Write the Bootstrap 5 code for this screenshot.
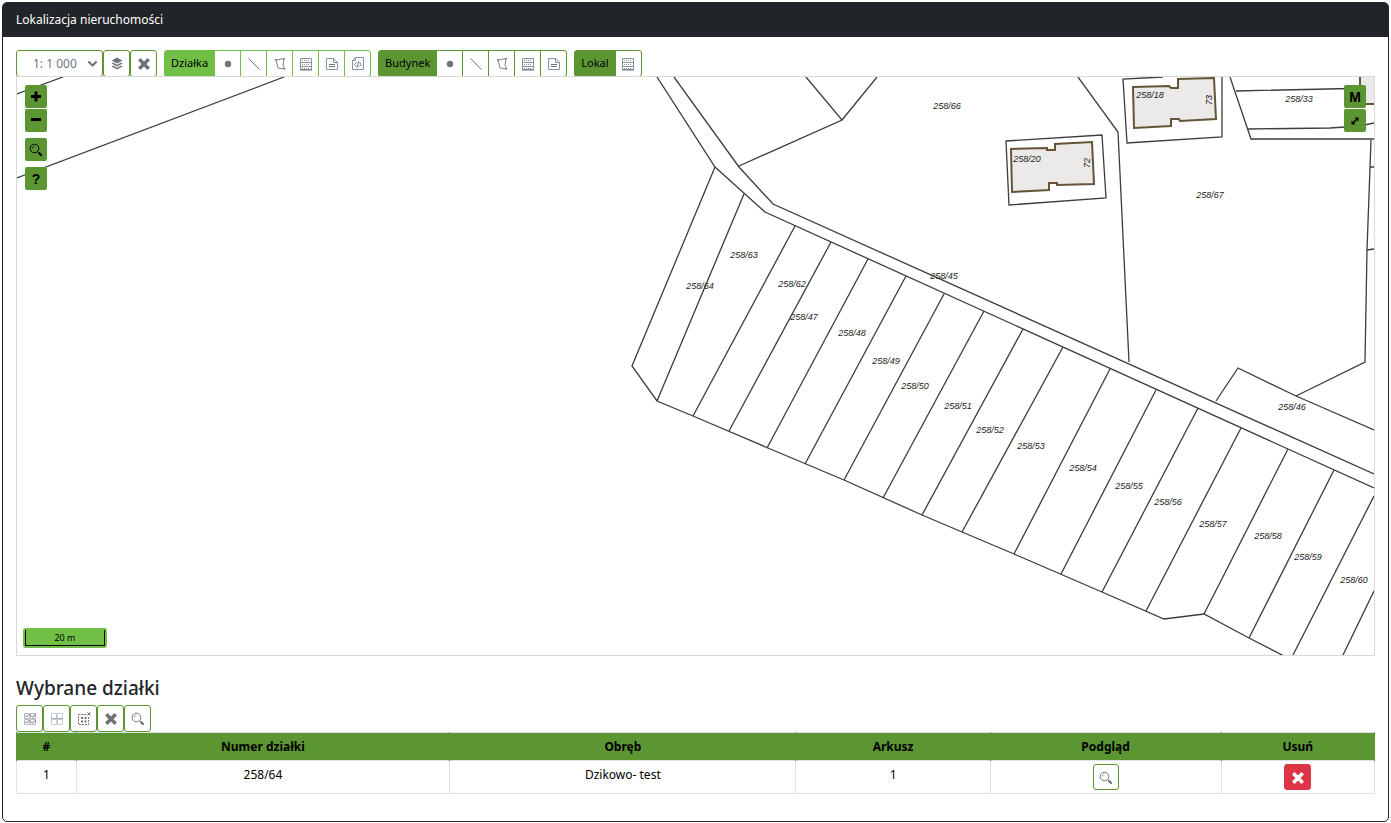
<!DOCTYPE html>
<html lang="pl">
<head>
<meta charset="utf-8">
<meta name="viewport" content="width=device-width, initial-scale=1">
<title>Lokalizacja nieruchomości</title>
<link href="https://cdn.jsdelivr.net/npm/bootstrap@5.3.0/dist/css/bootstrap.min.css" rel="stylesheet">
<style>
  :root { --leaf: #5c9632; --lime: #72bf47; --ink: #212529; --muted: #6c757d; }
  body { font-family: "Noto Sans", "Open Sans", sans-serif; font-size: 12px; line-height: 18px; color: #000; background: #fff; padding: 2px; }
  .panel { border: 1px solid var(--ink); border-radius: 5px; }
  .panel > .card-header { background: var(--ink); color: #fff; padding: 8px 13px; border-radius: 3px 3px 0 0; border-bottom: 0; line-height: 18px; }
  .panel > .card-body { padding: 13px 13px 27px; color: #000; }
  .tool { --bs-btn-padding-x: 0; --bs-btn-padding-y: 0; --bs-btn-font-size: 11px; --bs-btn-line-height: 18px; --bs-btn-border-radius: 3px;
    --bs-btn-color: var(--muted); --bs-btn-bg: #fff; --bs-btn-border-color: var(--leaf); --bs-btn-hover-bg: #eef6e8; --bs-btn-hover-color: var(--muted); --bs-btn-hover-border-color: var(--leaf);
    width: 27px; height: 27px; display: inline-flex; align-items: center; justify-content: center; }
  .tool svg { width: 16px; height: 16px; margin-top: 1px; }
  .tool-row { gap: 7px; }
  .btn-group > .tool { flex: none; }
  .lime .tool { --bs-btn-border-color: var(--lime); --bs-btn-hover-border-color: var(--lime); }
  .btn-group > .tool.tool-name { width: auto; padding: 0 6px 2px; color: #000; background: var(--leaf); }
  .lime.btn-group > .tool.tool-name { background: var(--lime); }
  .scale-pick { width: 87px; height: 27px; padding: 0 18px 0 16px; font-size: 12px; line-height: 18px; color: var(--muted); border-color: var(--leaf); border-radius: 3px; background-position: right 4px center; background-size: 11px;
    background-image: url("data:image/svg+xml,%3csvg xmlns='http://www.w3.org/2000/svg' viewBox='0 0 16 16'%3e%3cpath fill='none' stroke='%236c757d' stroke-width='3' d='m2 5 6 6 6-6'/%3e%3c/svg%3e"); }
  .map { border: 1px solid #d9d9d9; height: 580px; margin-top: -1px; }
  .map > svg { width: 100%; height: 100%; display: block; }
  .plots { fill: none; stroke: #3c3c3c; stroke-width: 1.3; }
  .houses { fill: #ebeae8; stroke: #65533a; stroke-width: 2; }
  .plot-no { font: italic 9px "Liberation Sans Narrow", "Liberation Sans", sans-serif; fill: #222; text-anchor: middle; }
  .map-tools { position: absolute; top: 8px; left: 8px; display: flex; flex-direction: column; gap: 6px; }
  .map-tools.at-right { left: auto; right: 8px; }
  .tool-pair { display: flex; flex-direction: column; gap: 1px; }
  .map-btn { width: 22px; height: 23px; padding: 0; border: 0; border-radius: 2px; background: var(--leaf); color: #000; display: flex; align-items: center; justify-content: center; font: bold 14px "Liberation Sans", sans-serif; }
  .map-btn svg { width: 14px; height: 14px; }
  .map-btn svg.lens { width: 16px; height: 16px; }
  .scale-line { position: absolute; left: 6px; bottom: 7px; width: 84px; padding: 2px; background: var(--lime); border-radius: 3px; }
  .scale-line > div { border: 1px solid #000; border-top: 0; text-align: center; font-size: 9px; line-height: 15px; }
  .subtitle { font-size: 19px; line-height: 24px; font-weight: 500; color: var(--ink); margin: 20px 0 5px; }
  .picked { margin: 0; text-align: center; table-layout: fixed; color: #000; border-color: #dee2e6; }
  .picked th, .picked td { padding: 4px; line-height: 18px; color: #000; }
  .picked thead th { background: var(--leaf); font-weight: 700; height: 28px; border-left-color: var(--leaf); border-right-color: var(--leaf); }
  .picked tbody td, .picked tbody th { padding: 3px; height: 33px; font-weight: 400; line-height: 21px; }
  .picked .tool { width: 26px; height: 26px; vertical-align: top; }
  .picked .tool.remove { --bs-btn-bg: #dc3545; --bs-btn-border-color: #dc3545; --bs-btn-color: #fff; --bs-btn-hover-bg: #bb2d3b; --bs-btn-hover-color: #fff; --bs-btn-hover-border-color: #bb2d3b; width: 27px; }
  .c-no { width: 4.4%; } .c-plot { width: 27.5%; } .c-area { width: 25.5%; } .c-sheet { width: 14.3%; } .c-view { width: 17%; }
</style>
</head>
<body>
<!-- Shared icon shapes -->
<svg class="d-none" aria-hidden="true">
  <symbol id="i-layers" viewBox="0 0 16 16"><g fill="currentColor"><path d="M8 1.500 13.500 4.500 8 7.500 2.500 4.500z"/><path d="M4 6.500 8 8.700l4-2.200 1.500 1L8 10.500l-5.500-3z"/><path d="M4 9.500 8 11.700l4-2.200 1.500 1L8 13.500l-5.500-3z"/></g></symbol>
  <symbol id="i-x" viewBox="0 0 16 16"><path d="m3.300 3.300 9.400 9.400m0-9.400-9.400 9.400" stroke="currentColor" stroke-width="3.600" fill="none"/></symbol>
  <symbol id="i-dot" viewBox="0 0 16 16"><circle cx="8" cy="8" r="3.200" fill="currentColor"/></symbol>
  <symbol id="i-line" viewBox="0 0 16 16"><path d="m2.500 2.500 11 11" stroke="currentColor" fill="none"/></symbol>
  <symbol id="i-poly" viewBox="0 0 16 16"><path d="m4 4 8-1.500M12 3l-1 6 1.500 3.500M4 4l2 8 6 1" stroke="currentColor" stroke-width=".9" fill="none"/><g fill="currentColor"><path d="M3 3.200h1.600v1.600H3zM11.200 2h1.600v1.600h-1.600zM11.500 12h1.600v1.600h-1.600z"/></g></symbol>
  <symbol id="i-form" viewBox="0 0 16 16"><path d="M2.500 2.500h11v11h-11z" stroke="#8495a8" fill="none"/><path d="M3 6.500h10M3 10.500h10" stroke="currentColor" stroke-width=".8" fill="none"/><path d="M4 4.500h8M4 8.500h8M4 12.500h8" stroke="currentColor" stroke-width=".8" stroke-dasharray="1 1" fill="none"/><path d="M2 14h12" stroke="currentColor"/></symbol>
  <symbol id="i-doc" viewBox="0 0 16 16"><path d="M2.500 2.500h7l4 4v7h-11zM9.500 2.500v4h4" stroke="#8495a8" fill="none"/><path d="M5 8.500h6M5 10.500h6" stroke="currentColor"/></symbol>
  <symbol id="i-code" viewBox="0 0 16 16"><path d="M2.500 4.500 5.500 1.500h8v12h-11zM2.500 4.500h3v-3" stroke="#8495a8" fill="none"/><path d="M6.500 6.500 4.700 8.500l1.800 2M9.500 6.500l1.800 2-1.800 2M8.700 5.500l-1.400 6" stroke="currentColor" fill="none"/></symbol>
  <symbol id="i-search" viewBox="0 0 16 16"><circle cx="6.500" cy="6.500" r="4.300" fill="none" stroke="currentColor"/><path d="M4.300 6.500a2.200 2.200 0 0 1 2.200-2.200" fill="none" stroke="currentColor" stroke-width=".6"/><path d="m9.500 9.500 1.500 1.500" stroke="currentColor"/><path d="m10.500 10.500 3.200 3.200" stroke="currentColor" stroke-width="2.200"/></symbol>
  <symbol id="i-checks" viewBox="0 0 16 16"><path d="M2.500 2.500h5v5h-5zM8.500 2.500h5v5h-5zM2.500 8.500h5v5h-5zM8.500 8.500h5v5h-5z" fill="none" stroke="#b9bcbf"/><path d="m3 4.500 1.500 1.500L7.500 3M9 4.500l1.500 1.500L14 3M3 10.500l1.500 1.500L7.500 9M9 10.500l1.500 1.500L14 9" stroke="currentColor" fill="none"/></symbol>
  <symbol id="i-grid" viewBox="0 0 16 16"><path d="M2.500 2.500h5v5h-5zM8.500 2.500h5v5h-5zM2.500 8.500h5v5h-5zM8.500 8.500h5v5h-5z" fill="none" stroke="#c6cdd8"/><path d="M2 7.500h12" stroke="#aaa"/></symbol>
  <symbol id="i-unselect" viewBox="0 0 16 16"><path d="M2.500 3.500h8M12.500 6v7.500h-10v-10" fill="none" stroke="currentColor" stroke-dasharray="2 1"/><path d="M5 6h2v2H5zM8.500 6h2v2h-2zM5 9.500h2v2H5zM8.500 9.500h2v2h-2z" fill="currentColor"/><path d="m11.500 1.500 3 3m0-3-3 3" stroke="currentColor"/></symbol>
</svg>

<main class="card panel">
  <div class="card-header">Lokalizacja nieruchomości</div>
  <div class="card-body">
    <div class="d-flex flex-wrap tool-row" role="toolbar" aria-label="Narzędzia mapy">
      <div class="d-flex">
        <select class="form-select scale-pick" aria-label="Skala mapy"><option>1: 1 000</option><option>1: 2 000</option></select>
        <button type="button" class="btn tool" aria-label="Warstwy"><svg><use href="#i-layers"/></svg></button>
        <button type="button" class="btn tool" aria-label="Wyczyść"><svg><use href="#i-x"/></svg></button>
      </div>
      <div class="btn-group lime">
        <button type="button" class="btn tool tool-name">Działka</button>
        <button type="button" class="btn tool" aria-label="Punkt"><svg><use href="#i-dot"/></svg></button>
        <button type="button" class="btn tool" aria-label="Linia"><svg><use href="#i-line"/></svg></button>
        <button type="button" class="btn tool" aria-label="Obszar"><svg><use href="#i-poly"/></svg></button>
        <button type="button" class="btn tool" aria-label="Formularz"><svg><use href="#i-form"/></svg></button>
        <button type="button" class="btn tool" aria-label="Plik"><svg><use href="#i-doc"/></svg></button>
        <button type="button" class="btn tool" aria-label="Kod"><svg><use href="#i-code"/></svg></button>
      </div>
      <div class="btn-group">
        <button type="button" class="btn tool tool-name">Budynek</button>
        <button type="button" class="btn tool" aria-label="Punkt"><svg><use href="#i-dot"/></svg></button>
        <button type="button" class="btn tool" aria-label="Linia"><svg><use href="#i-line"/></svg></button>
        <button type="button" class="btn tool" aria-label="Obszar"><svg><use href="#i-poly"/></svg></button>
        <button type="button" class="btn tool" aria-label="Formularz"><svg><use href="#i-form"/></svg></button>
        <button type="button" class="btn tool" aria-label="Plik"><svg><use href="#i-doc"/></svg></button>
      </div>
      <div class="btn-group">
        <button type="button" class="btn tool tool-name">Lokal</button>
        <button type="button" class="btn tool" aria-label="Formularz"><svg><use href="#i-form"/></svg></button>
      </div>
    </div>

    <div class="map position-relative overflow-hidden">
      <svg viewBox="17 77 1357 578" preserveAspectRatio="xMidYMid slice" role="img" aria-label="Mapa działek">
        <g class="plots">
          <path d="M17 94 63 77M17 178 284 77"/>
          <path d="M657 77 715 167 765 212 1374 488"/>
          <path d="M674 77 739 167 773 204 1374 474"/>
          <path d="M739 166 842 120 806 77M842 120 877 77"/>
          <path d="M715 167 632 366 657 401 693 416 768 448 844 480 922 515 1014 554 1102 592 1164 619 1204 614 1249 638 1284 656"/>
          <path d="M744 194 657 401M795 226 693 416M831 242 729 431M868 259 767 448M906 276 805 464M944 294 844 480M984 311 883 498M1023 329 922 515M1063 347 962 532M1110 369 1014 554M1156 390 1061 574M1198 408 1102 592M1241 428 1146 611M1288 449 1204 614M1334 470 1249 638M1374 496 1293 655M1374 591 1343 655"/>
          <path d="M1078 77 1118 132 1129 362M1216 401 1238 368 1296 396 1374 430M1296 396 1365 362 1367 250 1371 140M1367 250 1374 249M1370 167H1374"/>
          <path d="M1230 77 1251 139H1374M1236 91 1374 88M1248 129 1330 128 1360 126 1374 123"/>
          <path d="M1006 141 1102 135 1106 198 1009 205zM1163 77 1123 79 1127 143 1222 137V77"/>
        </g>
        <g class="houses">
          <path d="M1011 149 1047 148V150H1055V144L1092 142 1094 184 1057 185V183H1049V190L1012 192z"/>
          <path d="M1133 87 1169 86 1171 88H1178V79L1214 78 1216 119 1180 121 1179 119H1171V126L1134 128z"/>
          <path d="M1360 70V104H1378V70"/>
        </g>
        <g class="plot-no">
          <text x="947" y="109">258/66</text><text x="1299" y="102">258/33</text><text x="1150" y="98">258/18</text><text x="1027" y="162">258/20</text>
          <text x="1210" y="198">258/67</text><text x="744" y="258">258/63</text><text x="700" y="289">258/64</text><text x="792" y="287">258/62</text>
          <text x="804" y="320">258/47</text><text x="852" y="336">258/48</text><text x="886" y="364">258/49</text><text x="915" y="389">258/50</text>
          <text x="958" y="409">258/51</text><text x="990" y="433">258/52</text><text x="1031" y="449">258/53</text><text x="1083" y="471">258/54</text>
          <text x="1129" y="489">258/55</text><text x="1168" y="505">258/56</text><text x="1213" y="527">258/57</text><text x="1268" y="539">258/58</text>
          <text x="1308" y="560">258/59</text><text x="1354" y="583">258/60</text><text x="944" y="279">258/45</text><text x="1292" y="410">258/46</text>
          <text transform="rotate(-90 1090 163)" x="1090" y="163">72</text><text transform="rotate(-90 1212 100)" x="1212" y="100">73</text>
        </g>
      </svg>
      <div class="map-tools">
        <div class="tool-pair">
          <button type="button" class="map-btn" aria-label="Przybliż"><svg viewBox="0 0 14 14"><path d="M7 1.500v10M2 6.500h10" stroke="#000" stroke-width="3"/></svg></button>
          <button type="button" class="map-btn" aria-label="Oddal"><svg viewBox="0 0 14 14"><path d="M2 5.500h10" stroke="#000" stroke-width="3"/></svg></button>
        </div>
        <button type="button" class="map-btn" aria-label="Szukaj"><svg class="lens"><use href="#i-search"/></svg></button>
        <button type="button" class="map-btn">?</button>
      </div>
      <div class="map-tools at-right">
        <div class="tool-pair">
          <button type="button" class="map-btn">M</button>
          <button type="button" class="map-btn" aria-label="Pełny ekran"><svg viewBox="0 0 14 14"><path d="M6.500 3.500h4v4zM3.500 6.500v4h4z"/><path d="m5 9 4-4" stroke="#000" stroke-width="1.600"/></svg></button>
        </div>
      </div>
      <div class="scale-line"><div>20 m</div></div>
    </div>

    <h5 class="subtitle">Wybrane działki</h5>
    <div class="d-flex">
      <button type="button" class="btn tool" aria-label="Zaznacz wszystkie"><svg><use href="#i-checks"/></svg></button>
      <button type="button" class="btn tool" aria-label="Siatka"><svg><use href="#i-grid"/></svg></button>
      <button type="button" class="btn tool" aria-label="Odznacz"><svg><use href="#i-unselect"/></svg></button>
      <button type="button" class="btn tool" aria-label="Usuń zaznaczone"><svg><use href="#i-x"/></svg></button>
      <button type="button" class="btn tool" aria-label="Pokaż na mapie"><svg><use href="#i-search"/></svg></button>
    </div>
    <table class="table table-bordered picked">
      <colgroup><col class="c-no"><col class="c-plot"><col class="c-area"><col class="c-sheet"><col class="c-view"><col></colgroup>
      <thead><tr><th scope="col">#</th><th scope="col">Numer działki</th><th scope="col">Obręb</th><th scope="col">Arkusz</th><th scope="col">Podgląd</th><th scope="col">Usuń</th></tr></thead>
      <tbody><tr>
        <th scope="row">1</th><td>258/64</td><td>Dzikowo- test</td><td>1</td>
        <td><button type="button" class="btn tool" aria-label="Podgląd działki"><svg><use href="#i-search"/></svg></button></td>
        <td><button type="button" class="btn tool remove" aria-label="Usuń działkę"><svg><use href="#i-x"/></svg></button></td>
      </tr></tbody>
    </table>
  </div>
</main>
<script src="https://cdn.jsdelivr.net/npm/bootstrap@5.3.0/dist/js/bootstrap.bundle.min.js"></script>
</body>
</html>
